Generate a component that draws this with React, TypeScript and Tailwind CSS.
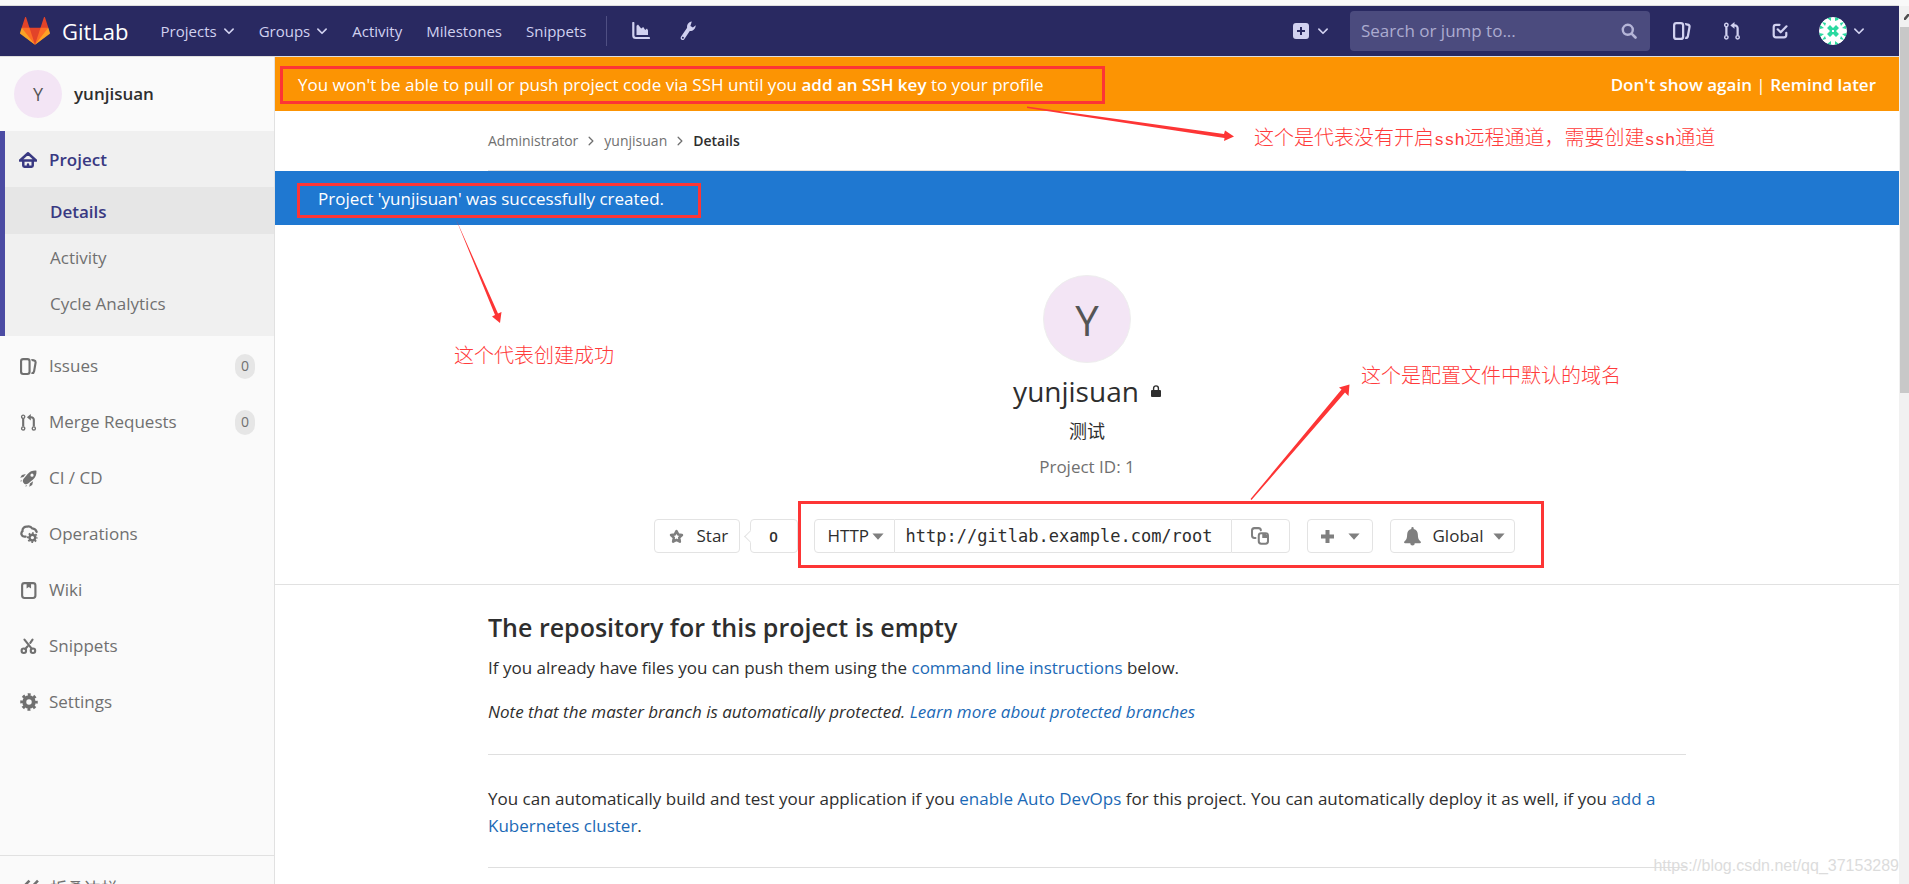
import type { ReactNode } from "react";

type IconProps = { className?: string };

function Svg({ className = "size-4", children }: { className?: string; children: ReactNode }) {
  return (
    <svg viewBox="0 0 16 16" className={`shrink-0 ${className}`} fill="currentColor" aria-hidden="true">
      {children}
    </svg>
  );
}

const Chevron = ({ className }: IconProps) => (
  <Svg className={className}>
    <path d="M2.500 5.500 8 11l5.500-5.500" fill="none" stroke="currentColor" strokeWidth="2.200" strokeLinecap="round" strokeLinejoin="round" />
  </Svg>
);

const AngleRight = () => (
  <Svg className="size-[10px]">
    <path d="M5 2l6 6-6 6" fill="none" stroke="currentColor" strokeWidth="2" strokeLinecap="round" strokeLinejoin="round" />
  </Svg>
);

const Caret = () => (
  <svg viewBox="0 0 12 7" className="h-[7px] w-3 shrink-0" fill="#7f7f7f" aria-hidden="true">
    <path d="M.4.5h11.200L6 6.800z" />
  </svg>
);

const IssuesIcon = ({ className }: IconProps) => (
  <Svg className={className}>
    <path d="M10.458 15.012l.311.055a3 3 0 0 0 3.476-2.433l1.389-7.879A3 3 0 0 0 13.200 1.280L11.230.933a3.002 3.002 0 0 0-.824-.031c.364.59.58 1.280.593 2.020l1.854.328a1 1 0 0 1 .811 1.158l-1.389 7.879a1 1 0 0 1-1.158.81l-.118-.02a3.980 3.980 0 0 1-.541 1.935zM3 0h4a3 3 0 0 1 3 3v10a3 3 0 0 1-3 3H3a3 3 0 0 1-3-3V3a3 3 0 0 1 3-3zm0 2a1 1 0 0 0-1 1v10a1 1 0 0 0 1 1h4a1 1 0 0 0 1-1V3a1 1 0 0 0-1-1H3z" />
  </Svg>
);

const MergeIcon = ({ className }: IconProps) => (
  <Svg className={className}>
    <g fill="none" stroke="currentColor">
      <circle cx="3" cy="2.600" r="1.500" strokeWidth="1.300" />
      <circle cx="3" cy="13.600" r="1.500" strokeWidth="1.300" />
      <circle cx="13" cy="13.600" r="1.500" strokeWidth="1.300" />
      <path d="M3 4.500v7.200M13 11.700V5.500a2.500 2.500 0 0 0-2.500-2.500H9.500" strokeWidth="2" />
    </g>
    <path d="M10.200 0v6L6.500 3z" />
  </Svg>
);

const RocketIcon = () => (
  <Svg className="size-[17px]">
    <path fillRule="evenodd" d="M15.500.6C12 .3 9.300 1.400 7.200 3.700L3.400 8.300c-.9 1.200-1 2.600-.2 3.700l.8.9c1.100.9 2.500.8 3.700-.1l4.600-3.900c2.300-2.100 3.400-4.800 3.200-8.300zM11.300 6.400a1.500 1.500 0 1 1 0-3 1.500 1.500 0 0 1 0 3zM5.500 3.800 1.800 4.600.2 7.400l3.100-.7zM12.300 10.500l-.8 3.600-2.800 1.700.6-3.200zM1.100 9.200l-.8 1.600 1.400-.3zM6.800 14.900l-1.600.8.300-1.400z" />
  </Svg>
);

function Gear({ cx, cy, r }: { cx: number; cy: number; r: number }) {
  const step = (2 * Math.PI * r * 0.84) / 8;
  return (
    <g fill="none" stroke="currentColor">
      <circle cx={cx} cy={cy} r={r * 0.54} strokeWidth={r * 0.46} />
      <circle cx={cx} cy={cy} r={r * 0.84} strokeWidth={r * 0.32} strokeDasharray={`${step * 0.5} ${step * 0.5}`} strokeDashoffset={step * 0.25} />
    </g>
  );
}

const OperationsIcon = () => (
  <Svg className="size-[18px]">
    <path d="M5 10.400H3.900a2.800 2.800 0 0 1-1.700-4.900C1.900 2.800 4.200 1.200 6.400 1.500c1.800-.5 3.600.2 4.500 1.600 2 .2 3.400 1.500 3.900 3" fill="none" stroke="currentColor" strokeWidth="2" strokeLinecap="round" />
    <Gear cx={11} cy={11.2} r={4.8} />
  </Svg>
);

const HomeIcon = () => (
  <Svg className="size-[18px]">
    <path d="M1.200 8.200 8 2l6.800 6.200M.8 8.400h14.400M3.800 8.400v4.500a1 1 0 0 0 1 1h6.400a1 1 0 0 0 1-1V8.400M8 12v1.500" fill="none" stroke="currentColor" strokeWidth="2.200" strokeLinecap="round" strokeLinejoin="round" />
  </Svg>
);

const WikiIcon = () => (
  <Svg className="size-[17px]">
    <rect x="2" y="1" width="12.500" height="14" rx="2.200" fill="none" stroke="currentColor" strokeWidth="2" />
    <path d="M6.200 1h4.200v5.200L8.300 4.800 6.200 6.200z" />
  </Svg>
);

const ScissorsIcon = () => (
  <Svg className="size-[17px]">
    <g fill="none" stroke="currentColor" strokeWidth="2">
      <circle cx="3.600" cy="12" r="2.100" />
      <circle cx="12.200" cy="12" r="2.100" />
      <path d="M4.200 1.500 11 10M11.800 1.500 9.700 4.600M7 8 4.900 10.300" strokeLinecap="round" />
    </g>
  </Svg>
);

const SettingsIcon = () => (
  <Svg className="size-[18px]">
    <Gear cx={8} cy={8} r={7.8} />
  </Svg>
);

const ChartIcon = () => (
  <svg viewBox="0 0 18 18" className="size-[18px]" fill="currentColor" aria-hidden="true">
    <path d="M1.300 1v12.500a2.500 2.500 0 0 0 2.500 2.500H17" fill="none" stroke="currentColor" strokeWidth="2.200" strokeLinecap="round" />
    <path d="M4.500 13V3.800L6 2.600l3.200 4 2-1.500 2 2.800 1.800-1.400L16 8.500V13z" />
  </svg>
);

const WrenchIcon = () => (
  <svg viewBox="0 0 18 20" className="h-5 w-[18px]" aria-hidden="true">
    <path d="M3.600 17 9.600 8.200" fill="none" stroke="currentColor" strokeWidth="4" strokeLinecap="round" />
    <path d="M12.800.6C9.400 1.200 7.500 4 8.200 7.200l1.600 2.600c3.400.8 6.600-1.300 7-5.600l-2.900 2.400-2.500-1.500z" fill="currentColor" />
    <circle cx="3.900" cy="16.700" r="1" fill="#292961" />
  </svg>
);

const PlusSquare = () => (
  <Svg className="size-4">
    <path fillRule="evenodd" d="M3 0h10a3 3 0 0 1 3 3v10a3 3 0 0 1-3 3H3a3 3 0 0 1-3-3V3a3 3 0 0 1 3-3zm4 7H4v2h3v3h2V9h3V7H9V4H7z" />
  </Svg>
);

const TodoIcon = () => (
  <Svg className="size-4">
    <path d="M7.500 1.800H4a2.300 2.300 0 0 0-2.300 2.300V12A2.300 2.300 0 0 0 4 14.300h8a2.300 2.300 0 0 0 2.300-2.300V9.800M5.700 6.300l3 3L14.500 3.300" fill="none" stroke="currentColor" strokeWidth="2.200" strokeLinecap="round" strokeLinejoin="round" />
  </Svg>
);

const SearchIcon = () => (
  <Svg className="size-4">
    <path d="M10.800 10.800 14.500 14.500" stroke="currentColor" strokeWidth="2.600" strokeLinecap="round" />
    <circle cx="6.800" cy="6.800" r="5" fill="none" stroke="currentColor" strokeWidth="2.400" />
  </Svg>
);

const StarIcon = () => (
  <Svg className="size-[15px] text-[#7f7f7f]">
    <path d="M8 2.200 9.800 5.800l4 .6-2.900 2.800.7 4.300L8 11.600l-3.600 1.900.7-4.300-2.900-2.800 4-.6z" fill="none" stroke="currentColor" strokeWidth="2.700" strokeLinejoin="round" />
  </Svg>
);

const CopyIcon = () => (
  <Svg className="size-[18px] text-[#7f7f7f]">
    <path d="M4 9.700H3A2.200 2.200 0 0 1 .9 7.500V3.200A2.200 2.200 0 0 1 3 1h3.600a2.200 2.200 0 0 1 2.200 1.900" fill="none" stroke="currentColor" strokeWidth="1.800" strokeLinecap="round" />
    <rect x="6.900" y="5.500" width="8.200" height="9.400" rx="2.200" fill="none" stroke="currentColor" strokeWidth="1.800" />
    <path d="M10 5.500v4.300h5V8l-2.500-2.500z" />
  </Svg>
);

const BellIcon = () => (
  <Svg className="size-[19px] text-[#7f7f7f]">
    <path d="M8 0a1 1 0 0 1 1 1v.6c2.400.5 3.500 2.400 3.500 4.800 0 3.200.8 4.700 2.300 5.800.6.5.3 1.500-.5 1.500H9.900a1.900 1.900 0 0 1-3.800 0H1.700c-.8 0-1.100-1-.5-1.500 1.500-1.100 2.300-2.600 2.300-5.800C3.500 4 4.600 2.100 7 1.600V1a1 1 0 0 1 1-1z" />
  </Svg>
);

const LockIcon = () => (
  <svg viewBox="0 0 10 12" className="h-3 w-[10px]" aria-hidden="true">
    <path d="M2.600 6V3.300a2.400 2.400 0 0 1 4.800 0V6" fill="none" stroke="#2e2e2e" strokeWidth="1.400" />
    <rect x="0" y="5" width="10" height="7" rx="1" fill="#2e2e2e" />
  </svg>
);

const Tanuki = () => (
  <svg viewBox="0 0 36 36" className="size-[30px]" aria-hidden="true">
    <path fill="#e24329" d="M2 14l9.380 9v-9l-4-12.280c-.205-.632-1.176-.632-1.380 0z" />
    <path fill="#e24329" d="M34 14l-9.380 9v-9l4-12.280c.205-.632 1.176-.632 1.380 0z" />
    <path fill="#e24329" d="M18 34.380 3 14h30z" />
    <path fill="#fc6d26" d="M18 34.380 11.380 14H2l4 11z" />
    <path fill="#fc6d26" d="M18 34.380 24.620 14H34l-4 11z" />
    <path fill="#fca326" d="M2 14L.1 20.160c-.18.565 0 1.200.5 1.560L18 34.380z" />
    <path fill="#fca326" d="M34 14l1.900 6.160c.18.565 0 1.200-.5 1.560L18 34.380z" />
  </svg>
);

const Identicon = () => (
  <svg viewBox="0 0 28 28" className="size-7 rounded-full" aria-hidden="true">
    <circle cx="14" cy="14" r="14" fill="#fff" />
    <g fill="#2bd9a0">
      <path d="M11 8l3 3 3-3 3 3-3 3 3 3-3 3-3-3-3 3-3-3 3-3-3-3z" />
      <path d="M8 1l4-1v4zM20 1l-4-1v4l3-1zM8 27l4 1v-4zM20 27l-4 1v-4zM1 8l4 3-4 1zM27 8l-4 3 4 1zM1 20l4-3-5-1zM27 20l-4-3 5-1zM3 5l4 1-1 3zM25 5l-4 1 1 3zM3 23l4-1-1-3zM25 23l-4-1 1-3z" />
    </g>
    <path d="M13 13h2v2h-2z" fill="#fff" />
  </svg>
);

function TopBar() {
  return (
    <header className="flex h-[51px] shrink-0 items-center border-b border-[#dedede] bg-[#292961] pr-[34px] pl-5 text-[15px] text-[#d1d1f0]">
      <a href="#" className="flex items-center gap-3 text-[22px] font-medium text-white">
        <Tanuki />
        GitLab
      </a>
      <nav className="ml-8 flex items-center">
        <a href="#" className="flex items-center gap-[6px]">Projects <Chevron className="size-3" /></a>
        <a href="#" className="ml-6 flex items-center gap-[6px]">Groups <Chevron className="size-3" /></a>
        <a href="#" className="ml-6">Activity</a>
        <a href="#" className="ml-6">Milestones</a>
        <a href="#" className="ml-6">Snippets</a>
        <span className="ml-5 h-[30px] w-px bg-[#4f4f83]" />
        <a href="#" aria-label="Instance statistics" className="ml-[25px]"><ChartIcon /></a>
        <a href="#" aria-label="Admin area" className="ml-[29px]"><WrenchIcon /></a>
      </nav>
      <div className="ml-auto flex items-center">
        <button type="button" aria-label="New" className="flex items-center gap-2"><PlusSquare /><Chevron className="size-3" /></button>
        <label className="ml-[21px] flex h-10 w-[300px] items-center rounded bg-[#4b4b7e] pr-[13px] pl-[11px] text-[#b5b5d8]">
          <input type="text" aria-label="Search" placeholder="Search or jump to..." className="w-full min-w-0 bg-transparent text-[17px] outline-none placeholder:text-[#acacd0]" />
          <SearchIcon />
        </label>
        <a href="#" aria-label="Issues" className="ml-[23px]"><IssuesIcon className="size-[18px]" /></a>
        <a href="#" aria-label="Merge requests" className="ml-8"><MergeIcon className="size-[18px]" /></a>
        <a href="#" aria-label="Todos" className="ml-[31px]"><TodoIcon /></a>
        <button type="button" aria-label="Account" className="ml-[31px] flex items-center gap-[6px]"><Identicon /><Chevron className="size-3" /></button>
      </div>
    </header>
  );
}

function NavRow({ icon, label, count }: { icon: ReactNode; label: string; count?: number }) {
  return (
    <a href="#" className="flex h-14 items-center pr-[19px] pl-5">
      <span className="flex w-[29px] items-center">{icon}</span>
      {label}
      {count !== undefined && (
        <span className="ml-auto flex h-[25px] w-5 items-center justify-center rounded-full bg-[#e6e6e6] text-sm">{count}</span>
      )}
    </a>
  );
}

function Sidebar() {
  return (
    <aside className="flex w-[275px] shrink-0 flex-col border-r border-[#e1e1e1] bg-[#fafafa] text-[17px] text-[#707070]">
      <a href="#" className="flex h-[74px] shrink-0 items-center gap-3 pl-[14px] font-semibold text-[#2e2e2e]">
        <span className="flex size-12 items-center justify-center rounded-full bg-[#f3e5f5] text-lg font-medium text-[#555]">Y</span>
        yunjisuan
      </a>
      <div className="h-[205px] shrink-0 border-l-[5px] border-[#4b4ba3] bg-[#f0f0f0]">
        <a href="#" className="flex h-14 items-center pt-[2px] pl-[14px] font-semibold text-[#393982]">
          <span className="w-[30px]"><HomeIcon /></span>
          Project
        </a>
        <a href="#" className="flex h-[47px] items-center bg-[#e6e6e6] pt-[2px] pl-[45px] font-semibold text-[#393982]">Details</a>
        <a href="#" className="flex h-[46px] items-center pt-[2px] pl-[45px]">Activity</a>
        <a href="#" className="flex h-[46px] items-center pt-[2px] pl-[45px]">Cycle Analytics</a>
      </div>
      <nav className="min-h-0 flex-1 overflow-hidden pt-[2px]">
        <NavRow icon={<IssuesIcon className="size-[17px]" />} label="Issues" count={0} />
        <NavRow icon={<MergeIcon className="size-[17px]" />} label="Merge Requests" count={0} />
        <NavRow icon={<RocketIcon />} label="CI / CD" />
        <NavRow icon={<OperationsIcon />} label="Operations" />
        <NavRow icon={<WikiIcon />} label="Wiki" />
        <NavRow icon={<ScissorsIcon />} label="Snippets" />
        <NavRow icon={<SettingsIcon />} label="Settings" />
      </nav>
      <button type="button" className="flex h-[29px] shrink-0 items-start gap-[11px] overflow-hidden border-t border-[#e1e1e1] pt-[21px] pl-[22px] text-left leading-6">
        <Svg className="mt-[2px] size-[17px]">
          <path d="M7 1.500.8 8 7 14.500M15 1.500 8.800 8l6.200 6.500" fill="none" stroke="currentColor" strokeWidth="2.400" />
        </Svg>
        折叠边栏
      </button>
    </aside>
  );
}

const btn = "flex h-[34px] items-center rounded border border-[#e3e3e3] bg-white";

function ProjectHome() {
  return (
    <section className="flex flex-col items-center border-b border-[#e1e1e1] pt-[50px] pb-[31px]">
      <div className="flex size-[88px] items-center justify-center rounded-full border border-[#eee] bg-[#f3e5f5] text-[42px] text-[#555]">Y</div>
      <h1 className="mt-[10px] flex items-center gap-3 text-[28px] leading-9">yunjisuan <LockIcon /></h1>
      <p className="mt-[10px] text-lg leading-6">测试</p>
      <p className="mt-3 leading-6 text-[#707070]">Project ID: 1</p>
      <div className="mt-10 mr-[6px] flex items-center">
        <button type="button" className={`${btn} w-[86px] gap-[13px] pl-[14px]`}><StarIcon />Star</button>
        <a href="#" className={`${btn} relative ml-[10px] w-12 justify-center text-[15px] font-semibold`}>
          <span className="absolute top-[12px] left-[-5px] size-[9px] rotate-45 border-b border-l border-[#e3e3e3] bg-white" />
          0
        </a>
        <div className="ml-4 flex">
          <button type="button" className={`${btn} w-[81px] gap-[3px] rounded-r-none pl-[13px]`}>HTTP<Caret /></button>
          <input
            readOnly
            aria-label="Project clone URL"
            value="http://gitlab.example.com/root/yunjisuan.git"
            className="h-[34px] w-[336px] border-y border-[#e3e3e3] pr-[18px] pl-[11px] font-['DejaVu_Sans_Mono',monospace] text-[17px] outline-none"
          />
          <button type="button" aria-label="Copy URL" className={`${btn} w-[59px] justify-center rounded-l-none`}><CopyIcon /></button>
        </div>
        <button type="button" aria-label="Add" className={`${btn} ml-[17px] w-[66px] justify-center gap-[13px]`}>
          <svg viewBox="0 0 15 15" className="size-[15px]" aria-hidden="true"><path d="M7.500 1v13M1 7.500h13" stroke="#7f7f7f" strokeWidth="4" /></svg>
          <Caret />
        </button>
        <button type="button" className={`${btn} ml-[17px] w-[125px] gap-[9px] pl-3`}><BellIcon /><span className="pl-[2px]">Global</span><Caret /></button>
      </div>
    </section>
  );
}

function EmptyRepository() {
  const link = "text-[#1b69b6]";
  return (
    <section className="mx-auto w-full max-w-[1198px] leading-[27px]">
      <h2 className="mt-6 text-[25px] leading-9 font-semibold">The repository for this project is empty</h2>
      <p className="mt-[9px]">If you already have files you can push them using the <a href="#" className={link}>command line instructions</a> below.</p>
      <p className="mt-[17px] italic">Note that the master branch is automatically protected. <a href="#" className={link}>Learn more about protected branches</a></p>
      <hr className="mt-[29px] border-[#dfdfdf]" />
      <p className="mt-[30px]">
        You can automatically build and test your application if you <a href="#" className={link}>enable Auto DevOps</a> for this project. You can automatically deploy it as well, if you <a href="#" className={link}>add a Kubernetes cluster</a>.
      </p>
      <hr className="mt-7 border-[#dfdfdf]" />
    </section>
  );
}

function Annotations() {
  const note = "absolute whitespace-nowrap font-['Noto_Sans_CJK_SC',sans-serif] text-xl leading-6 font-light text-[#ff3b3b]";
  const mono = "font-['Liberation_Mono',monospace] text-[17px] font-normal";
  return (
    <div className="pointer-events-none absolute inset-0 overflow-hidden">
      <svg className="absolute top-0 left-0 h-full w-full" fill="#fd3535" aria-hidden="true">
        <g fill="none" stroke="#fd3535" strokeWidth="3">
          <rect x="281.500" y="67.500" width="822" height="35" />
          <rect x="298.500" y="184.500" width="401" height="32" />
          <rect x="799.500" y="502.500" width="743" height="64" />
        </g>
        <path d="M1027 106.500 1224 134 1225 130.500 1234 136.500 1224 141 1224.500 138 1027 108z" />
        <path d="M455.500 218 498 313.500 501.500 312 500 323 492 316.500 495 315z" />
        <path d="M1250.500 499 1341.500 389.500 1339 387.500 1349.500 384.500 1348.500 396 1345 392.500 1251.500 500z" />
      </svg>
      <p className={`${note} top-[125px] left-[1254px]`}>这个是代表没有开启<span className={mono}>ssh</span>远程通道，需要创建<span className={mono}>ssh</span>通道</p>
      <p className={`${note} top-[343px] left-[454px]`}>这个代表创建成功</p>
      <p className={`${note} top-[363px] left-[1361px]`}>这个是配置文件中默认的域名</p>
      <p className="absolute right-[10px] bottom-[6px] font-['Liberation_Sans',sans-serif] text-base leading-6 text-[#dcdcdc]">https://blog.csdn.net/qq_37153289</p>
    </div>
  );
}

export default function App() {
  return (
    <div className="relative flex h-screen overflow-hidden bg-white font-['Open_Sans','Noto_Sans_CJK_SC',sans-serif] text-[17px] text-[#2e2e2e]">
      <div className="flex min-w-0 flex-1 flex-col">
        <div className="h-[6px] shrink-0 border-b border-[#dcdcdc] bg-[#f9f9f9]" />
        <TopBar />
        <div className="flex min-h-0 flex-1">
          <Sidebar />
          <main className="min-w-0 flex-1 overflow-hidden">
            <div className="flex h-[54px] items-center justify-between bg-[#fc9403] px-[23px] pt-[2px] text-white">
              <p>You won't be able to pull or push project code via SSH until you <a href="#" className="font-semibold">add an SSH key</a> to your profile</p>
              <p className="font-semibold"><a href="#">Don't show again</a> <span className="font-normal">|</span> <a href="#">Remind later</a></p>
            </div>
            <nav aria-label="Breadcrumb" className="mx-auto flex h-[60px] w-full max-w-[1198px] items-center gap-2 border-b border-[#e1e1e1] text-sm text-[#707070]">
              <a href="#">Administrator</a><AngleRight />
              <a href="#">yunjisuan</a><AngleRight />
              <a href="#" className="font-semibold text-[#2e2e2e]">Details</a>
            </nav>
            <div className="flex h-[54px] items-center bg-[#1f78d1] pt-[2px] pl-[43px] text-white">Project 'yunjisuan' was successfully created.</div>
            <ProjectHome />
            <EmptyRepository />
          </main>
        </div>
      </div>
      <div className="flex w-[10px] shrink-0 flex-col bg-[#f1f1f1]" aria-hidden="true">
        <div className="flex h-[27px] items-end border-t-[6px] border-[#f9f9f9] pb-[7px] pl-[5px]">
          <svg viewBox="0 0 5 6" className="h-[6px] w-[5px]"><path d="M0 6 5 0" stroke="#505050" strokeWidth="2.500" /></svg>
        </div>
        <div className="ml-[1px] h-[366px] bg-[#c8c8c8]" />
      </div>
      <Annotations />
    </div>
  );
}
